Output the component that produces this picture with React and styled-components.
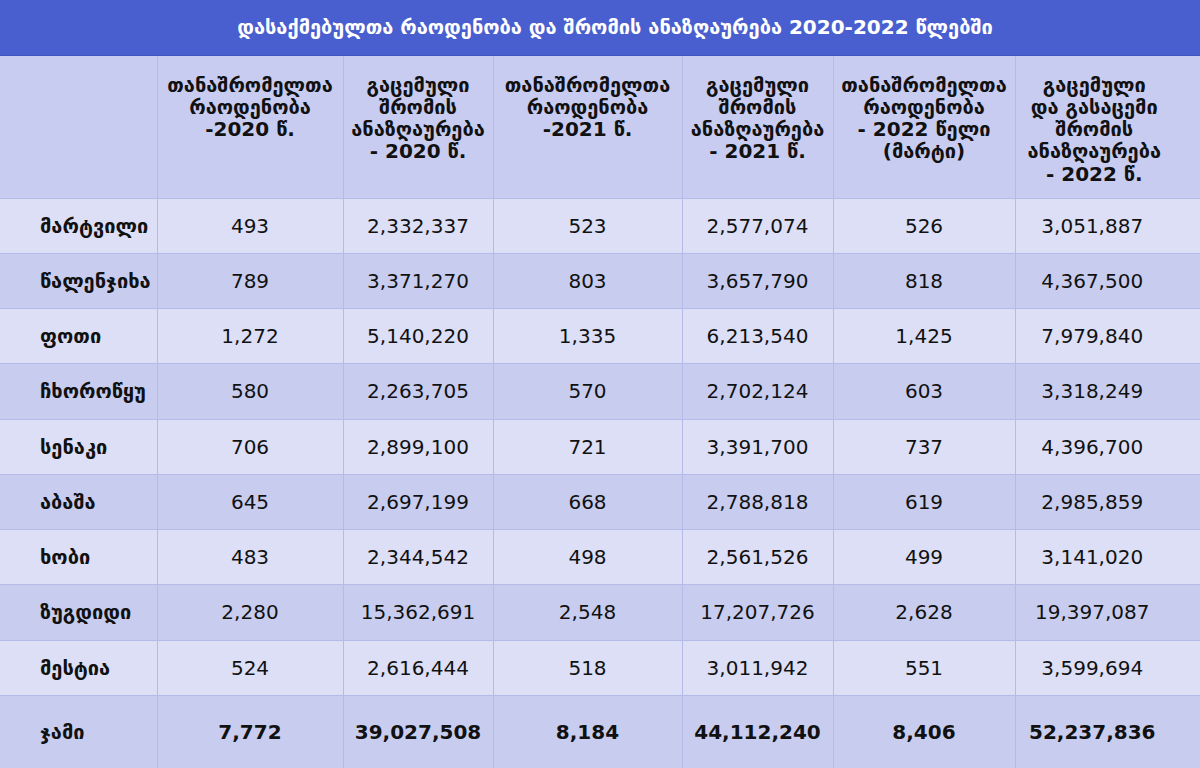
import React from 'react';
import styled, { createGlobalStyle } from 'styled-components';

const GlobalStyle = createGlobalStyle`
  html, body {
    margin: 0;
    padding: 0;
    background: #dcdff6;
  }
  body {
    font-family: "DejaVu Sans", "Noto Sans", sans-serif;
    color: #111;
  }
`;

const columns = [157, 186, 150, 189, 151, 182, 185];

const headers = [
  ['თანაშრომელთა', 'რაოდენობა', '-2020 წ.'],
  ['გაცემული', 'შრომის', 'ანაზღაურება', '- 2020 წ.'],
  ['თანაშრომელთა', 'რაოდენობა', '-2021 წ.'],
  ['გაცემული', 'შრომის', 'ანაზღაურება', '- 2021 წ.'],
  ['თანაშრომელთა', 'რაოდენობა', '- 2022 წელი', '(მარტი)'],
  ['გაცემული', 'და გასაცემი', 'შრომის', 'ანაზღაურება', '- 2022 წ.'],
];

const rows = [
  ['მარტვილი', '493', '2,332,337', '523', '2,577,074', '526', '3,051,887'],
  ['წალენჯიხა', '789', '3,371,270', '803', '3,657,790', '818', '4,367,500'],
  ['ფოთი', '1,272', '5,140,220', '1,335', '6,213,540', '1,425', '7,979,840'],
  ['ჩხოროწყუ', '580', '2,263,705', '570', '2,702,124', '603', '3,318,249'],
  ['სენაკი', '706', '2,899,100', '721', '3,391,700', '737', '4,396,700'],
  ['აბაშა', '645', '2,697,199', '668', '2,788,818', '619', '2,985,859'],
  ['ხობი', '483', '2,344,542', '498', '2,561,526', '499', '3,141,020'],
  ['ზუგდიდი', '2,280', '15,362,691', '2,548', '17,207,726', '2,628', '19,397,087'],
  ['მესტია', '524', '2,616,444', '518', '3,011,942', '551', '3,599,694'],
];

const total = ['ჯამი', '7,772', '39,027,508', '8,184', '44,112,240', '8,406', '52,237,836'];

const Table = styled.table`
  width: 1200px;
  table-layout: fixed;
  border-collapse: collapse;
  border-spacing: 0;
`;

const TitleCell = styled.th`
  height: 55px;
  padding: 0 0 0 30px;
  box-sizing: border-box;
  background: #4a5fcf;
  border-bottom: 1px solid #4254c0;
  color: #fff;
  font-size: 20px;
  font-weight: bold;
  text-align: center;
  vertical-align: middle;
`;

const HeadCell = styled.th`
  height: 143px;
  padding: 18px 4px 0;
  box-sizing: border-box;
  background: #c8ccf0;
  border-left: 1px solid #b5bbe8;
  color: #111;
  font-size: 20px;
  font-weight: bold;
  line-height: 22.3px;
  text-align: center;
  vertical-align: top;
  &:first-child {
    border-left: none;
  }
  &:last-child {
    padding-right: 31px;
  }
`;

const Row = styled.tr`
  background: ${(p) => (p.$alt ? '#c8cdf0' : '#dcdff6')};
`;

const Cell = styled.td`
  height: ${(p) => (p.$total ? '73px' : '55.25px')};
  padding: 0;
  box-sizing: border-box;
  border-top: 1px solid #b5bbe8;
  border-left: 1px solid #b5bbe8;
  font-size: 20px;
  font-weight: ${(p) => (p.$total ? 'bold' : 'normal')};
  text-align: center;
  vertical-align: middle;
  &:first-child {
    border-left: none;
  }
  &:last-child {
    padding-right: 31px;
  }
`;

const LabelCell = styled(Cell)`
  padding-left: 40px;
  text-align: left;
  font-weight: bold;
`;

const App = () => {
  return (
    <>
      <GlobalStyle />
      <Table>
        <colgroup>
          {columns.map((w, i) => (
            <col key={i} style={{ width: w }} />
          ))}
        </colgroup>
        <thead>
          <tr>
            <TitleCell colSpan={7}>
              დასაქმებულთა რაოდენობა და შრომის ანაზღაურება 2020-2022 წლებში
            </TitleCell>
          </tr>
          <tr>
            <HeadCell />
            {headers.map((lines, i) => (
              <HeadCell key={i}>
                {lines.map((l, j) => (
                  <React.Fragment key={j}>
                    {j > 0 && <br />}
                    {l}
                  </React.Fragment>
                ))}
              </HeadCell>
            ))}
          </tr>
        </thead>
        <tbody>
          {rows.map((r, i) => (
            <Row key={r[0]} $alt={i % 2 === 1}>
              <LabelCell>{r[0]}</LabelCell>
              {r.slice(1).map((v, j) => (
                <Cell key={j}>{v}</Cell>
              ))}
            </Row>
          ))}
          <Row $alt>
            <LabelCell $total>{total[0]}</LabelCell>
            {total.slice(1).map((v, j) => (
              <Cell key={j} $total>{v}</Cell>
            ))}
          </Row>
        </tbody>
      </Table>
    </>
  );
};

export default App;
